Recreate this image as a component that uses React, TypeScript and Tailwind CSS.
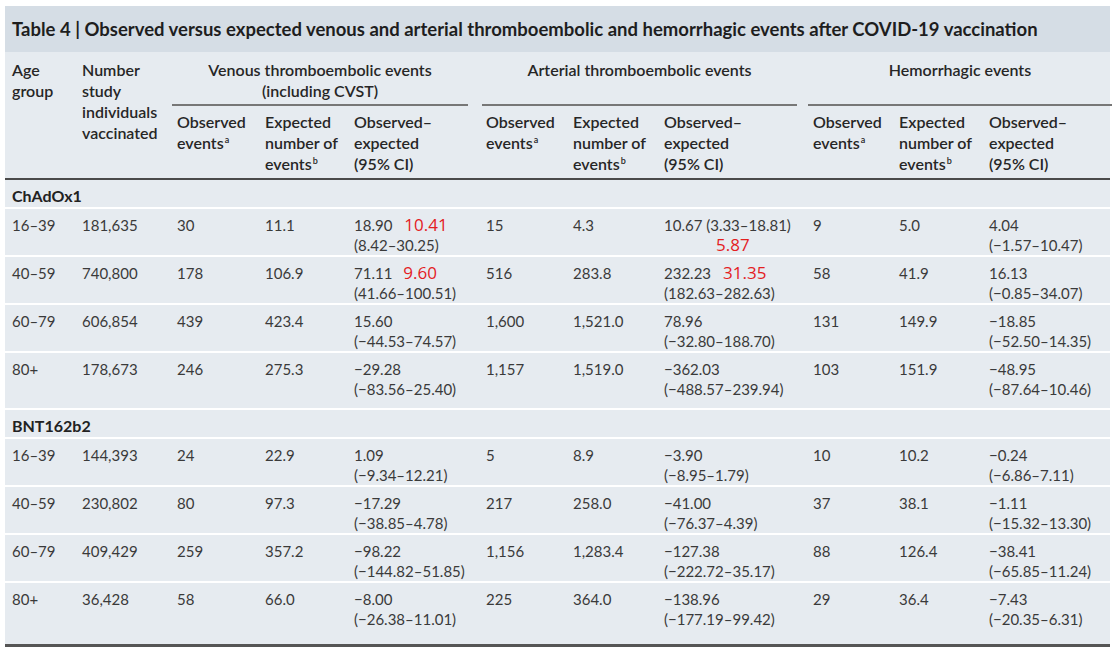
import type { ReactNode } from "react";

type Est = { v: string; ci: string; red?: string; redGap?: string };

type Row = {
  age: string;
  n: string;
  vObs: string;
  vExp: string;
  vOe: Est;
  aObs: string;
  aExp: string;
  aOe: Est;
  hObs: string;
  hExp: string;
  hOe: Est;
};

const cols =
  "grid grid-cols-[70px_95px_88px_89px_132px_87px_91px_149px_86px_90px_121px]";

const chadox: Row[] = [
  {
    age: "16–39", n: "181,635", vObs: "30", vExp: "11.1",
    vOe: { v: "18.90", ci: "(8.42–30.25)", red: "10.41", redGap: "ml-[12px]" },
    aObs: "15", aExp: "4.3", aOe: { v: "10.67 (3.33–18.81)", ci: "", red: "5.87" },
    hObs: "9", hExp: "5.0", hOe: { v: "4.04", ci: "(−1.57–10.47)" },
  },
  {
    age: "40–59", n: "740,800", vObs: "178", vExp: "106.9",
    vOe: { v: "71.11", ci: "(41.66–100.51)", red: "9.60", redGap: "ml-[11px]" },
    aObs: "516", aExp: "283.8",
    aOe: { v: "232.23", ci: "(182.63–282.63)", red: "31.35", redGap: "ml-[12px]" },
    hObs: "58", hExp: "41.9", hOe: { v: "16.13", ci: "(−0.85–34.07)" },
  },
  {
    age: "60–79", n: "606,854", vObs: "439", vExp: "423.4",
    vOe: { v: "15.60", ci: "(−44.53–74.57)" },
    aObs: "1,600", aExp: "1,521.0", aOe: { v: "78.96", ci: "(−32.80–188.70)" },
    hObs: "131", hExp: "149.9", hOe: { v: "−18.85", ci: "(−52.50–14.35)" },
  },
  {
    age: "80+", n: "178,673", vObs: "246", vExp: "275.3",
    vOe: { v: "−29.28", ci: "(−83.56–25.40)" },
    aObs: "1,157", aExp: "1,519.0", aOe: { v: "−362.03", ci: "(−488.57–239.94)" },
    hObs: "103", hExp: "151.9", hOe: { v: "−48.95", ci: "(−87.64–10.46)" },
  },
];

const bnt: Row[] = [
  {
    age: "16–39", n: "144,393", vObs: "24", vExp: "22.9",
    vOe: { v: "1.09", ci: "(−9.34–12.21)" },
    aObs: "5", aExp: "8.9", aOe: { v: "−3.90", ci: "(−8.95–1.79)" },
    hObs: "10", hExp: "10.2", hOe: { v: "−0.24", ci: "(−6.86–7.11)" },
  },
  {
    age: "40–59", n: "230,802", vObs: "80", vExp: "97.3",
    vOe: { v: "−17.29", ci: "(−38.85–4.78)" },
    aObs: "217", aExp: "258.0", aOe: { v: "−41.00", ci: "(−76.37–4.39)" },
    hObs: "37", hExp: "38.1", hOe: { v: "−1.11", ci: "(−15.32–13.30)" },
  },
  {
    age: "60–79", n: "409,429", vObs: "259", vExp: "357.2",
    vOe: { v: "−98.22", ci: "(−144.82–51.85)" },
    aObs: "1,156", aExp: "1,283.4", aOe: { v: "−127.38", ci: "(−222.72–35.17)" },
    hObs: "88", hExp: "126.4", hOe: { v: "−38.41", ci: "(−65.85–11.24)" },
  },
  {
    age: "80+", n: "36,428", vObs: "58", vExp: "66.0",
    vOe: { v: "−8.00", ci: "(−26.38–11.01)" },
    aObs: "225", aExp: "364.0", aOe: { v: "−138.96", ci: "(−177.19–99.42)" },
    hObs: "29", hExp: "36.4", hOe: { v: "−7.43", ci: "(−20.35–6.31)" },
  },
];

const Red = ({ children, className }: { children: ReactNode; className?: string }) => (
  <span
    className={"text-[17px] leading-[20px] text-[#e3201f] " + (className ?? "")}
    style={{ fontFamily: '"Open Sans", sans-serif' }}
  >
    {children}
  </span>
);

const EstCell = ({ e }: { e: Est }) => {
  // annotation under the single-line cell (arterial 16–39)
  if (!e.ci) {
    return (
      <div>
        <div className="whitespace-nowrap">{e.v}</div>
        {e.red && <Red className="block ml-[52px]">{e.red}</Red>}
      </div>
    );
  }
  return (
    <div>
      <div className="whitespace-nowrap">
        {e.v}
        {e.red && <Red className={e.redGap}>{e.red}</Red>}
      </div>
      <div className="whitespace-nowrap">{e.ci}</div>
    </div>
  );
};

const DataRow = ({ r, end, last }: { r: Row; end?: boolean; last?: boolean }) => (
  <div
    className={
      cols +
      " pl-[7px] pt-[6px] text-[15px] leading-[20px] text-[#3a3a3a] " +
      (last ? "pb-[15px]" : end ? "pb-[9px] border-b-2 border-white" : "border-b-2 border-white")
    }
  >
    <div>{r.age}</div>
    <div>{r.n}</div>
    <div>{r.vObs}</div>
    <div>{r.vExp}</div>
    <EstCell e={r.vOe} />
    <div>{r.aObs}</div>
    <div>{r.aExp}</div>
    <EstCell e={r.aOe} />
    <div>{r.hObs}</div>
    <div>{r.hExp}</div>
    <EstCell e={r.hOe} />
  </div>
);

const Section = ({ name }: { name: string }) => (
  <div className="pl-[7px] pt-[5px] pb-[1px] text-[16px] leading-[21px] font-bold text-[#222] border-b-2 border-white">
    {name}
  </div>
);

const Ev = ({ sup }: { sup: string }) => (
  <>
    events<sup className="text-[9px] relative -top-[6px] ml-[1px]">{sup}</sup>
  </>
);

const SubHead = () => (
  <>
    <div>
      Observed
      <br />
      <Ev sup="a" />
    </div>
    <div>
      Expected
      <br />
      number of
      <br />
      <Ev sup="b" />
    </div>
    <div>
      Observed–
      <br />
      expected
      <br />
      (95% CI)
    </div>
  </>
);

export default function App() {
  return (
    <div
      className="bg-white w-[1115px] h-[649px] pt-[6px] pl-[5px]"
      style={{ fontFamily: "Lato, 'Noto Sans', sans-serif" }}
    >
      <div className="w-[1105px] bg-[#e6ebf0]">
        <div className="bg-[#d5dde5] pl-[7px] py-[11px] text-[18.5px] leading-[24px] font-bold text-[#1e1e1e] whitespace-nowrap">
          Table 4 | Observed versus expected venous and arterial thromboembolic and hemorrhagic events after COVID-19 vaccination
        </div>

        {/* header */}
        <div
          className={
            cols +
            " grid-rows-[auto_auto] pl-[7px] pt-[7px] text-[16px] leading-[21px] font-semibold text-[#262626] border-b-2 border-[#4a4a4a]"
          }
        >
          <div className="row-span-2">
            Age
            <br />
            group
          </div>
          <div className="row-span-2">
            Number
            <br />
            study
            <br />
            individuals
            <br />
            vaccinated
          </div>
          <div className="col-span-3 ml-[-5px] mr-[18px] pb-[3px] text-center border-b-2 border-[#777]">
            Venous thromboembolic events
            <br />
            (including CVST)
          </div>
          <div className="col-span-3 ml-[-4px] mr-[16px] pb-[3px] text-center border-b-2 border-[#777]">
            Arterial thromboembolic events
          </div>
          <div className="col-span-3 ml-[-5px] mr-[-2px] pb-[3px] text-center border-b-2 border-[#777]">
            Hemorrhagic events
          </div>
          <div className="col-span-9 grid grid-cols-subgrid pt-[5px] pb-[4px]">
            <SubHead />
            <SubHead />
            <SubHead />
          </div>
        </div>

        <Section name="ChAdOx1" />
        {chadox.map((r, i) => (
          <DataRow key={"c" + r.age} r={r} end={i === chadox.length - 1} />
        ))}
        <Section name="BNT162b2" />
        {bnt.map((r, i) => (
          <DataRow key={"b" + r.age} r={r} last={i === bnt.length - 1} />
        ))}
        <div className="h-[3px] bg-[#555]" />
      </div>
    </div>
  );
}
